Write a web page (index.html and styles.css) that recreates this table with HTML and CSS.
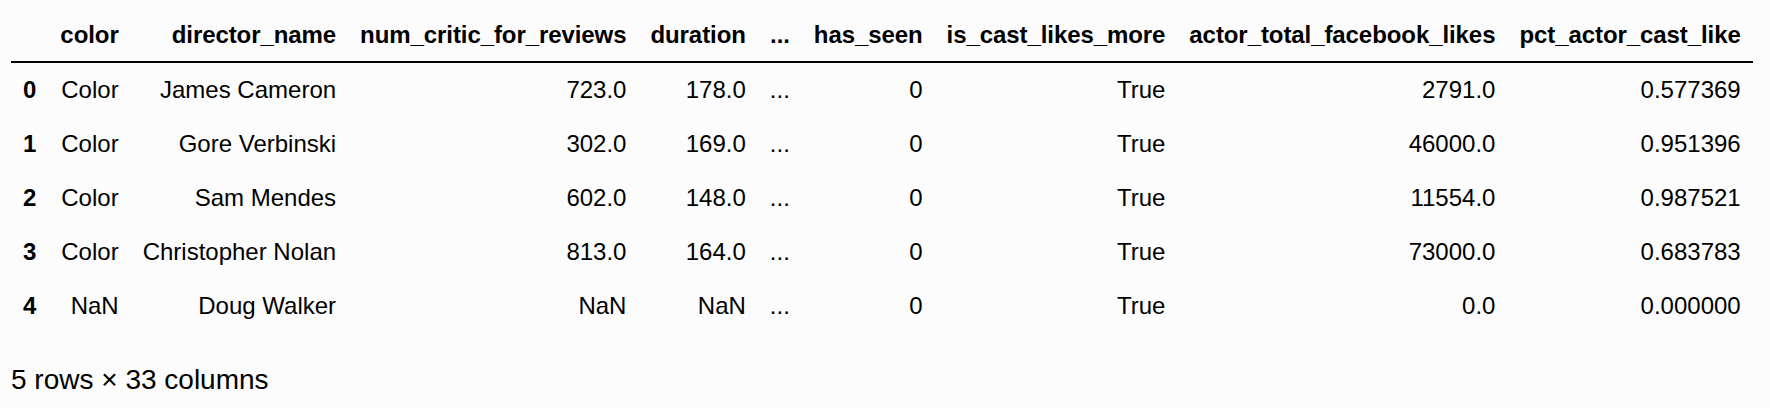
FILE: index.html
```html
<!DOCTYPE html>
<html>
<head>
<meta charset="utf-8">
<link rel="stylesheet" href="styles.css">
</head>
<body>
<div class="output">
  <table class="dataframe">
    <thead>
      <tr>
        <th></th>
        <th>color</th>
        <th>director_name</th>
        <th>num_critic_for_reviews</th>
        <th>duration</th>
        <th>...</th>
        <th>has_seen</th>
        <th>is_cast_likes_more</th>
        <th>actor_total_facebook_likes</th>
        <th>pct_actor_cast_like</th>
      </tr>
    </thead>
    <tbody>
      <tr>
        <th>0</th><td>Color</td><td>James Cameron</td><td>723.0</td><td>178.0</td><td>...</td><td>0</td><td>True</td><td>2791.0</td><td>0.577369</td>
      </tr>
      <tr>
        <th>1</th><td>Color</td><td>Gore Verbinski</td><td>302.0</td><td>169.0</td><td>...</td><td>0</td><td>True</td><td>46000.0</td><td>0.951396</td>
      </tr>
      <tr>
        <th>2</th><td>Color</td><td>Sam Mendes</td><td>602.0</td><td>148.0</td><td>...</td><td>0</td><td>True</td><td>11554.0</td><td>0.987521</td>
      </tr>
      <tr>
        <th>3</th><td>Color</td><td>Christopher Nolan</td><td>813.0</td><td>164.0</td><td>...</td><td>0</td><td>True</td><td>73000.0</td><td>0.683783</td>
      </tr>
      <tr>
        <th>4</th><td>NaN</td><td>Doug Walker</td><td>NaN</td><td>NaN</td><td>...</td><td>0</td><td>True</td><td>0.0</td><td>0.000000</td>
      </tr>
    </tbody>
  </table>
  <p class="shape">5 rows × 33 columns</p>
</div>
</body>
</html>
```

FILE: styles.css
```css
html, body {
  margin: 0;
  background: #fcfcfc;
}

body {
  font-family: "Liberation Sans", Arial, Helvetica, sans-serif;
  color: #000;
}

.output {
  padding: 7px 11px 0 11px;
}

.dataframe {
  border-collapse: collapse;
  border-spacing: 0;
  font-size: 24px;
  line-height: 28px;
}

.dataframe th,
.dataframe td {
  padding: 13px 12px;
  text-align: right;
  vertical-align: middle;
  white-space: nowrap;
}

.dataframe th {
  font-weight: bold;
}

.dataframe thead th {
  padding-top: 14px;
  padding-bottom: 12px;
  letter-spacing: -0.08px;
}

.dataframe thead tr {
  border-bottom: 2px solid #000;
}

.dataframe tbody th {
  text-align: left;
}

.shape {
  margin: 31px 0 0 0;
  font-size: 28px;
  line-height: 32px;
}
```
